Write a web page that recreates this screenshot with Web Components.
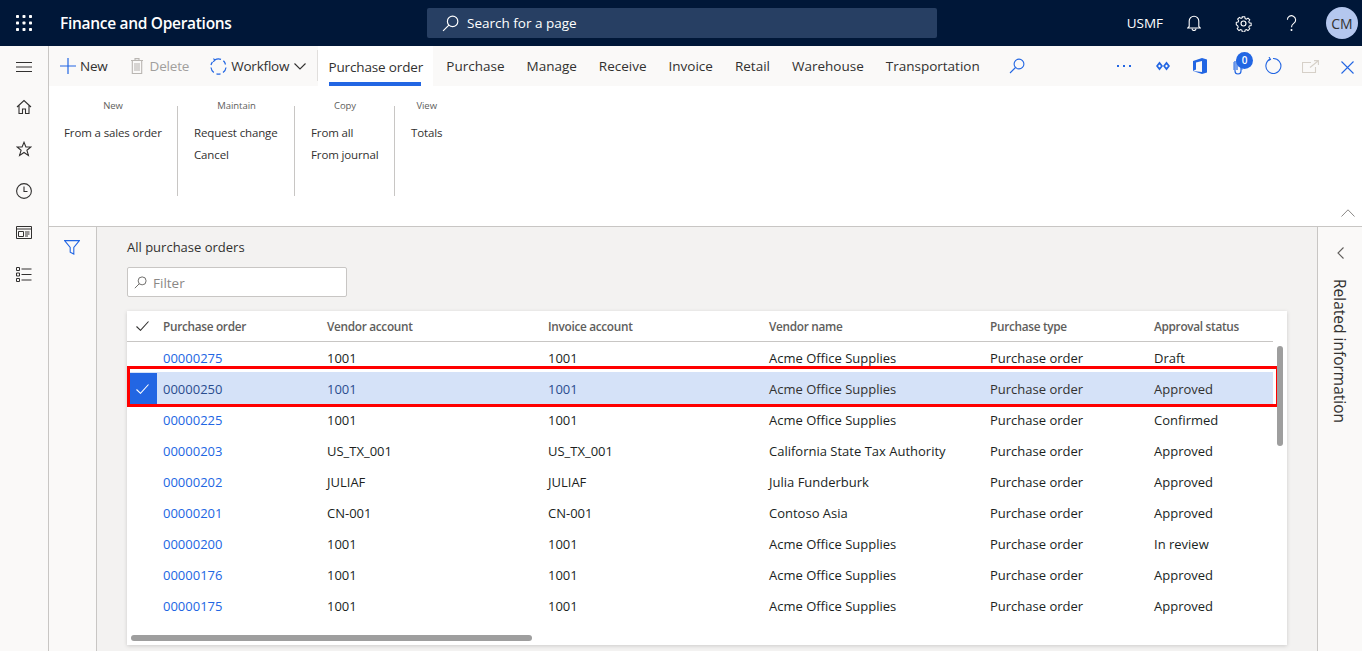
<!DOCTYPE html>
<html lang="en"><head><meta charset="utf-8"><title>Finance and Operations</title>
<style>
html,body{margin:0;height:100%;overflow:hidden}
body{font-family:"Open Sans","Liberation Sans",sans-serif;font-size:13px;color:#323130}
fo-app{display:flex;flex-direction:column;width:1362px;height:651px}
</style></head><body>
<fo-app></fo-app>
<script>
const I={
 waffle:'<svg width="18" height="18" viewBox="0 0 18 18" fill="#fff"><g><rect x="1" y="1" width="3" height="3" rx=".8"/><rect x="7.5" y="1" width="3" height="3" rx=".8"/><rect x="14" y="1" width="3" height="3" rx=".8"/><rect x="1" y="7.5" width="3" height="3" rx=".8"/><rect x="7.5" y="7.5" width="3" height="3" rx=".8"/><rect x="14" y="7.5" width="3" height="3" rx=".8"/><rect x="1" y="14" width="3" height="3" rx=".8"/><rect x="7.5" y="14" width="3" height="3" rx=".8"/><rect x="14" y="14" width="3" height="3" rx=".8"/></g></svg>',
 search:(c,s)=>`<svg width="${s}" height="${s}" viewBox="0 0 16 16" fill="none" stroke="${c}" stroke-width="1.1"><circle cx="10" cy="6" r="4.9"/><path d="M6.5 9.5 1 15"/></svg>`,
 bell:'<svg width="14" height="16" viewBox="0 0 14 16" fill="none" stroke="#fff" stroke-width="1.1"><path d="M2.200 11.500V6a4.800 4.800 0 0 1 9.600 0v5.500l1.500 1.500H.7z"/><path d="M5 13.500a2 2 0 0 0 4 0"/></svg>',
 gear:'<svg width="17" height="17" viewBox="0 0 18 18" fill="none" stroke="#fff" stroke-width="1.2"><circle cx="9" cy="9" r="2.6"/><path d="M7.5 1h3l.4 2.2 1.5.7 1.900-1.200 2.100 2.100-1.200 1.900.6 1.500 2.200.4v2.800l-2.200.4-.6 1.500 1.200 1.900-2.100 2.100-1.900-1.200-1.500.6-.4 2.200h-3l-.4-2.200-1.500-.6-1.900 1.200-2.100-2.100 1.200-1.900-.6-1.500L.5 10.400V7.600l2.200-.4.6-1.500-1.200-1.900 2.100-2.100 1.900 1.200 1.500-.7z" transform="translate(.9 .9) scale(.9)"/></svg>',
 help:'<svg width="11" height="17" viewBox="0 0 12 18" fill="none" stroke="#fff" stroke-width="1.2"><path d="M1.500 5a4.500 4.500 0 1 1 7.200 3.600C7 9.900 6 10.500 6 13"/><circle cx="6" cy="16" r=".5" fill="#fff"/></svg>',
 burger:'<svg width="16" height="10" viewBox="0 0 16 10" stroke="#323130"><path d="M0 .5h16M0 5h16M0 9.500h16"/></svg>',
 home:'<svg width="16" height="16" viewBox="0 0 16 16" fill="none" stroke="#323130" stroke-width="1.1"><path d="M1 8 8 1.500 15 8M3 6.500V14.500h3.500V10h3v4.500H13V6.500"/></svg>',
 star:'<svg width="16" height="16" viewBox="0 0 16 16" fill="none" stroke="#323130" stroke-width="1.1"><path d="M8 1.300 9.900 6h5l-4 3.200 1.500 5.200L8 11.500l-4.400 2.900 1.500-5.200-4-3.200h5z"/></svg>',
 clock:'<svg width="16" height="16" viewBox="0 0 16 16" fill="none" stroke="#323130" stroke-width="1.1"><circle cx="8" cy="8" r="7.400"/><path d="M8 3.500V8.500H11.500"/></svg>',
 work:'<svg width="16" height="13" viewBox="0 0 16 13" fill="none" stroke="#323130"><path d="M.5.500h15v12H.5zM.5 3h15M2.500 5.500h5v5h-5zM9 6h4.500M9 8h4.500M9 10h3"/></svg>',
 list:'<svg width="16" height="15" viewBox="0 0 16 15" fill="none" stroke="#323130"><path d="M.5.500h3v3h-3zM.5 6h3v3h-3zM.5 11.500h3v3h-3zM5.500 2h10M5.500 7.500h10M5.500 13h10"/></svg>',
 plus:'<svg width="16" height="16" viewBox="0 0 16 16" stroke="#2266e3" stroke-width="1.200"><path d="M8 0v16M0 8h16"/></svg>',
 trash:'<svg width="12" height="16" viewBox="0 0 12 16" fill="none" stroke="#b9b6b2" stroke-width="1.100"><path d="M0 2.500h12M4 2.500V.6h4v1.900M1.300 2.500h9.400v13H1.300zM4 5v8M6 5v8M8 5v8"/></svg>',
 flow:'<svg width="17" height="17" viewBox="0 0 17 17" fill="none" stroke="#2266e3" stroke-width="1.200"><path d="M5 1.800A7.500 7.500 0 0 1 11 1.400M13.400 2.800A7.500 7.500 0 0 1 15.500 6.500M16 9.500A7.500 7.500 0 0 1 13 14.600M10.500 15.800A7.500 7.500 0 0 1 6.500 15.800M3.800 14.500A7.500 7.500 0 0 1 1 9.500M1 7A7.500 7.500 0 0 1 2.500 4"/><path d="M3.400.6 5 2 3.200 3.800"/></svg>',
 down:'<svg width="12" height="7" viewBox="0 0 12 7" fill="none" stroke="#323130" stroke-width="1.100"><path d="M.5.500 6 6 11.500.500"/></svg>',
 dyn:'<svg width="14" height="10" viewBox="0 0 14 10" fill="#2266e3"><path d="M3.500.5 7 5 3.500 9.500 0 5zM10.500.5 14 5l-3.500 4.500L7 5z"/><path d="M3.500 3.500 5 5 3.500 6.500 2 5zM10.500 3.500 12 5l-1.500 1.500L9 5z" fill="#faf9f8"/></svg>',
 office:'<svg width="14" height="16" viewBox="0 0 14 16"><path fill="#2266e3" d="M0 3 9 0l5 1.500v13L9 16 0 13l9 1V3l-6 1.500v7L0 13z"/></svg>',
 clip:'<svg width="10" height="18" viewBox="0 0 10 18" fill="none" stroke="#2266e3" stroke-width="1.200"><path d="M2 4v10a3 3 0 0 0 6 0V3.500a2 2 0 0 0-4 0V13"/><path d="M.8 5v8M9 5v8" stroke-opacity=".6"/></svg>',
 refresh:'<svg width="17" height="17" viewBox="0 0 17 17" fill="none" stroke="#2266e3" stroke-width="1.100"><path d="M5 2.300a7.500 7.500 0 1 0 3-.8"/><path d="M4 0l1.500 2.400L3 3.600"/></svg>',
 pop:'<svg width="17" height="13" viewBox="0 0 17 13" fill="none" stroke="#d6d0c8" stroke-width="1.100"><path d="M9 2.500H.5v10h13V7M8 7.500 16 1M12 .6h4.400V5"/></svg>',
 close:'<svg width="13" height="13" viewBox="0 0 13 13" stroke="#2266e3" stroke-width="1.100"><path d="M.5.500l12 12M12.500.500l-12 12"/></svg>',
 up:'<svg width="14" height="8" viewBox="0 0 14 8" fill="none" stroke="#8a8886"><path d="M.5 7.500 7 .8l6.500 6.700"/></svg>',
 filter:'<svg width="16" height="15" viewBox="0 0 16 15" fill="none" stroke="#2266e3" stroke-width="1.100"><path d="M.6.600h14.800L9.800 7.500v6.500L6.200 12.200V7.500z"/></svg>',
 check:c=>`<svg width="13" height="10" viewBox="0 0 13 10" fill="none" stroke="${c}" stroke-width="1.100"><path d="M.5 5.500 4.500 9.300 12.500.5"/></svg>`,
 left:'<svg width="7" height="12" viewBox="0 0 7 12" fill="none" stroke="#605e5c" stroke-width="1.100"><path d="M6.500.5 1 6l5.500 5.500"/></svg>'
};
const def=(n,css,html)=>customElements.define(n,class extends HTMLElement{connectedCallback(){if(this.shadowRoot)return;const r=this.attachShadow({mode:'open'});r.innerHTML=`<style>${css}</style>${typeof html==='function'?html(this):html}`;}});

def('fo-header',`:host{display:flex;align-items:center;height:46px;background:#001738;color:#fff;flex:none;position:relative}
.w{display:flex;margin-left:15px;width:18px}
.t{margin-left:27px;width:367px;font-size:15.500px;font-weight:600;letter-spacing:-.3px;white-space:nowrap}
.s{display:flex;align-items:center;width:510px;height:30px;background:#273f63;border-radius:2px;box-sizing:border-box;padding-left:15px;gap:8px;font-size:13.500px}
.s svg{flex:none}
.r{margin-left:auto;display:flex;align-items:center;height:46px}
.u{font-size:13.500px;margin-right:24px}
.i{display:flex}
.a{width:32px;height:32px;border-radius:50%;background:#b4c7ee;color:#323130;font-size:14px;display:flex;align-items:center;justify-content:center;margin:0 4px 0 29px}`,
`<div class="w">${I.waffle}</div><div class="t">Finance and Operations</div><div class="s">${I.search('#fff',17)}<span>Search for a page</span></div>
<div class="r"><span class="u">USMF</span><div class="i">${I.bell}</div><div class="i" style="margin-left:34px">${I.gear}</div><div class="i" style="margin-left:34px">${I.help}</div><div class="a">CM</div></div>`);

def('fo-nav',`:host{display:flex;flex-direction:column;align-items:center;width:48px;border-right:1px solid #c8c6c4;background:#faf9f8;flex:none;padding-top:16px;box-sizing:content-box}
div{height:42px;display:flex;align-items:flex-start;justify-content:center;}
.b{height:37px}`,
`<div class="b">${I.burger}</div><div>${I.home}</div><div>${I.star}</div><div>${I.clock}</div><div style="padding-top:1px;height:41px">${I.work}</div><div>${I.list}</div>`);

def('fo-action',`:host{display:flex;align-items:center;height:40px;background:#faf9f8;flex:none;position:relative;font-size:13.500px}
.b{display:flex;align-items:center;white-space:nowrap;letter-spacing:-.2px}
.d{color:#a19f9d}
.sep{width:1px;height:31px;background:#e1dfdd;margin-top:-1px}
.tab{height:40px;background:#fff;display:flex;flex-direction:column;align-items:center;width:115px;box-sizing:border-box;padding-top:12px;position:relative;white-space:nowrap;letter-spacing:-.15px}
.tab i{position:absolute;left:11px;width:92px;bottom:0;height:4px;background:#2266e3}
.t{white-space:nowrap;margin-left:22px}
svg{flex:none}
.ab{position:absolute;display:flex}
.badge{position:absolute;left:1187px;top:6px;width:17px;height:17px;border-radius:50%;background:#2266e3;color:#fff;font-size:10px;font-weight:600;text-align:center;line-height:17px}
.dots{position:absolute;left:1068px;top:19px;display:flex;gap:4px}.dots b{width:2px;height:2px;background:#2266e3}`,
`<div class="b" style="margin-left:11px">${I.plus}<span style="margin-left:4px">New</span></div>
<div class="b d" style="margin-left:23px">${I.trash}<span style="margin-left:7px">Delete</span></div>
<div class="b" style="margin-left:21px">${I.flow}<span style="margin-left:4px;margin-right:5px">Workflow</span>${I.down}</div>
<div class="sep" style="margin-left:11px"></div>
<div class="tab">Purchase order<i></i></div>
<span class="t" style="margin-left:13px">Purchase</span><span class="t">Manage</span><span class="t">Receive</span><span class="t">Invoice</span><span class="t">Retail</span><span class="t">Warehouse</span><span class="t">Transportation</span>
<div class="b" style="margin-left:29px">${I.search('#2266e3',16)}</div>
<div class="dots"><b></b><b></b><b></b></div>
<div class="ab" style="left:1107px;top:15px">${I.dyn}</div>
<div class="ab" style="left:1144px;top:12px">${I.office}</div>
<div class="ab" style="left:1184px;top:11px">${I.clip}</div>
<div class="badge">0</div>
<div class="ab" style="left:1216px;top:11px">${I.refresh}</div>
<div class="ab" style="left:1253px;top:14px">${I.pop}</div>
<div class="ab" style="left:1292px;top:15px">${I.close}</div>`);

def('fo-group',`:host{display:flex;flex-direction:column;align-items:center;padding:0 15px 0 16px;height:90px;box-sizing:border-box;border-right:1px solid #c8c6c4;font-size:11.500px;position:relative;white-space:nowrap;letter-spacing:-.13px}
:host(:last-child){border-right:0}
.h{font-size:9.500px;color:#605e5c;height:0;position:relative;top:-7px;line-height:14px;width:100%;text-align:center;letter-spacing:-.05px}
.c{display:flex;flex-direction:column;gap:6px;padding-top:19px;align-self:stretch}
::slotted(span){display:block;line-height:16px}`,
t=>`<div class="h">${t.getAttribute('label')}</div><div class="c"><slot></slot></div>`);

def('fo-ribbon',`:host{display:block;height:140px;background:#fff;border-bottom:1px solid #c8c6c4;box-sizing:content-box;flex:none;position:relative}
.g{display:flex;padding-top:20px}
.u{position:absolute;left:1292px;top:123px;display:flex}`,
`<div class="g"><slot></slot></div><div class="u">${I.up}</div>`);

const rows=[['00000275','1001','1001','Acme Office Supplies','Purchase order','Draft'],
['00000250','1001','1001','Acme Office Supplies','Purchase order','Approved'],
['00000225','1001','1001','Acme Office Supplies','Purchase order','Confirmed'],
['00000203','US_TX_001','US_TX_001','California State Tax Authority','Purchase order','Approved'],
['00000202','JULIAF','JULIAF','Julia Funderburk','Purchase order','Approved'],
['00000201','CN-001','CN-001','Contoso Asia','Purchase order','Approved'],
['00000200','1001','1001','Acme Office Supplies','Purchase order','In review'],
['00000176','1001','1001','Acme Office Supplies','Purchase order','Approved'],
['00000175','1001','1001','Acme Office Supplies','Purchase order','Approved']];
const cols='36px 164px 221px 221px 221px 164px 1fr';
def('fo-grid',`:host{display:block;position:relative;width:1160px;height:334px;background:#fff;box-shadow:0 1px 4px rgba(0,0,0,.16);font-size:13px}
.hd,.r{display:grid;grid-template-columns:${cols};width:1146px;box-sizing:border-box}
.hd{height:31px;border-bottom:1px solid #c8c6c4;align-items:center;color:#605e5c;font-size:11.800px;font-weight:600;letter-spacing:-.3px}
.hd .k{display:flex;padding-left:9px}
.r{height:31px;align-items:center;color:#201f1e}
.a{color:#2266e3}
.r.sel{background:#d5e2f8;box-shadow:0 -1px 0 #d5e2f8;border-left:3px solid #fff;grid-template-columns:33px 164px 221px 221px 221px 164px 1fr;color:#323130}
.r.sel .l{color:#2b4d8f}
.r.sel .k{background:#2266e3;height:31px;display:flex;align-items:center;justify-content:center;margin-right:6px;padding-right:2px}
.red{position:absolute;left:0;top:55px;width:1152px;height:41px;border:3px solid #f00;box-sizing:border-box;pointer-events:none}
.vs{position:absolute;left:1150px;top:35px;width:6px;height:100px;border-radius:3px;background:#9e9e9e}
.hs{position:absolute;left:4px;top:324px;width:401px;height:6px;border-radius:3px;background:#9e9e9e}`,
()=>`<div class="hd"><div class="k">${I.check('#323130')}</div><div>Purchase order</div><div>Vendor account</div><div>Invoice account</div><div>Vendor name</div><div>Purchase type</div><div>Approval status</div></div>
<div class="body">${rows.map((r,i)=>`<div class="r${i==1?' sel':''}"><div class="k">${i==1?I.check('#fff'):''}</div><div class="a${i==1?' l':''}">${r[0]}</div><div class="${i==1?'l':''}">${r[1]}</div><div class="${i==1?'l':''}">${r[2]}</div><div>${r[3]}</div><div>${r[4]}</div><div>${r[5]}</div></div>`).join('')}</div>
<div class="red"></div><div class="vs"></div><div class="hs"></div>`);

def('fo-content',`:host{display:flex;flex:1;min-height:0;background:#f3f2f1}
.f{width:47px;border-right:1px solid #c8c6c4;background:#faf9f8;display:flex;justify-content:center;align-items:flex-start;padding-top:13px;box-sizing:content-box;flex:none}
.f svg{margin-right:2px}
.m{flex:1;padding:10px 0 0 30px;min-width:0}
.tt{font-size:13px;line-height:20px;height:20px;color:#323130}
.fl{margin-top:10px;width:220px;height:30px;box-sizing:border-box;background:#fff;border:1px solid #c8c6c4;border-radius:2px;display:flex;align-items:center;padding-left:6px;gap:6px;color:#8a8886;font-size:13.500px}
.fl span{position:relative;top:1px}
.gw{margin-top:14px}
.p{width:44px;border-left:1px solid #c8c6c4;background:#faf9f8;flex:none;display:flex;flex-direction:column;align-items:center;padding-top:20px}
.v{writing-mode:vertical-rl;font-size:15.500px;margin-top:20px;color:#323130;white-space:nowrap;font-weight:500}`,
`<div class="f">${I.filter}</div><div class="m"><div class="tt">All purchase orders</div><div class="fl">${I.search('#605e5c',13)}<span>Filter</span></div><div class="gw"><fo-grid></fo-grid></div></div>
<div class="p">${I.left}<div class="v">Related information</div></div>`);

def('fo-main',`:host{display:flex;flex-direction:column;flex:1;min-width:0}`,`<slot></slot>`);
def('fo-body',`:host{display:flex;flex:1;min-height:0}`,`<slot></slot>`);

document.querySelector('fo-app').innerHTML=`<fo-header></fo-header><fo-body><fo-nav></fo-nav><fo-main><fo-action></fo-action><fo-ribbon>
<fo-group label="New" style="width:129px;padding-left:15px"><span>From a sales order</span></fo-group>
<fo-group label="Maintain" style="width:117px"><span>Request change</span><span>Cancel</span></fo-group>
<fo-group label="Copy" style="width:100px"><span>From all</span><span>From journal</span></fo-group>
<fo-group label="View"><span>Totals</span></fo-group>
</fo-ribbon><fo-content></fo-content></fo-main></fo-body>`;
</script></body></html>
